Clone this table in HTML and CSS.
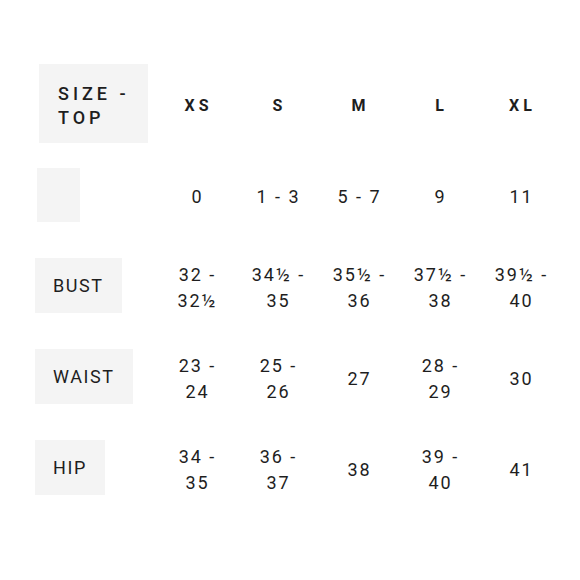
FILE: index.html
```html
<!DOCTYPE html>
<html>
<head>
<meta charset="utf-8">
<link rel="stylesheet" href="styles.css">
</head>
<body>
<div class="chart">
  <div class="label"><span class="box box-head">SIZE - TOP</span></div>
  <div class="head">XS</div>
  <div class="head">S</div>
  <div class="head">M</div>
  <div class="head">L</div>
  <div class="head">XL</div>

  <div class="label"><span class="box box-empty"></span></div>
  <div class="val"><span>0</span></div>
  <div class="val"><span>1 - 3</span></div>
  <div class="val"><span>5 - 7</span></div>
  <div class="val"><span>9</span></div>
  <div class="val"><span>11</span></div>

  <div class="label"><span class="box">BUST</span></div>
  <div class="val"><span>32 - 32½</span></div>
  <div class="val"><span>34½ - 35</span></div>
  <div class="val"><span>35½ - 36</span></div>
  <div class="val"><span>37½ - 38</span></div>
  <div class="val"><span>39½ - 40</span></div>

  <div class="label"><span class="box">WAIST</span></div>
  <div class="val"><span>23 - 24</span></div>
  <div class="val"><span>25 - 26</span></div>
  <div class="val"><span>27</span></div>
  <div class="val"><span>28 - 29</span></div>
  <div class="val"><span>30</span></div>

  <div class="label"><span class="box">HIP</span></div>
  <div class="val"><span>34 - 35</span></div>
  <div class="val"><span>36 - 37</span></div>
  <div class="val"><span>38</span></div>
  <div class="val"><span>39 - 40</span></div>
  <div class="val"><span>41</span></div>
</div>
</body>
</html>
```
FILE: styles.css
```css
html, body {
  margin: 0;
  padding: 0;
  background: #ffffff;
}
body {
  font-family: Roboto, "Liberation Sans", sans-serif;
  color: #1e1e1e;
  padding: 58px 0 0 35px;
}
.chart {
  display: grid;
  grid-template-columns: 121px repeat(5, 81px);
  grid-auto-rows: 91px;
}
.label {
  display: flex;
  align-items: center;
}
.box {
  display: flex;
  align-items: center;
  height: 55px;
  box-sizing: border-box;
  padding: 0 18px;
  background: #f4f4f4;
  font-size: 18px;
  letter-spacing: 1.6px;
}
.box-head {
  width: 109px;
  height: 79px;
  margin-left: 4px;
  padding: 4px 16px 0 19px;
  font-weight: 500;
  letter-spacing: 4px;
  line-height: 24px;
}
.box-empty {
  width: 43px;
  height: 54px;
  padding: 0;
  margin-left: 2px;
}
.head {
  display: flex;
  align-items: center;
  justify-content: center;
  font-size: 16px;
  font-weight: 700;
  letter-spacing: 4px;
  padding: 4px 0 0 4px;
}
.val {
  display: flex;
  align-items: center;
  justify-content: center;
  text-align: center;
  font-size: 18px;
  letter-spacing: 2px;
  line-height: 26px;
  padding: 5px 0 0 2px;
}
.val span {
  display: inline-block;
  max-width: 60px;
}
```
